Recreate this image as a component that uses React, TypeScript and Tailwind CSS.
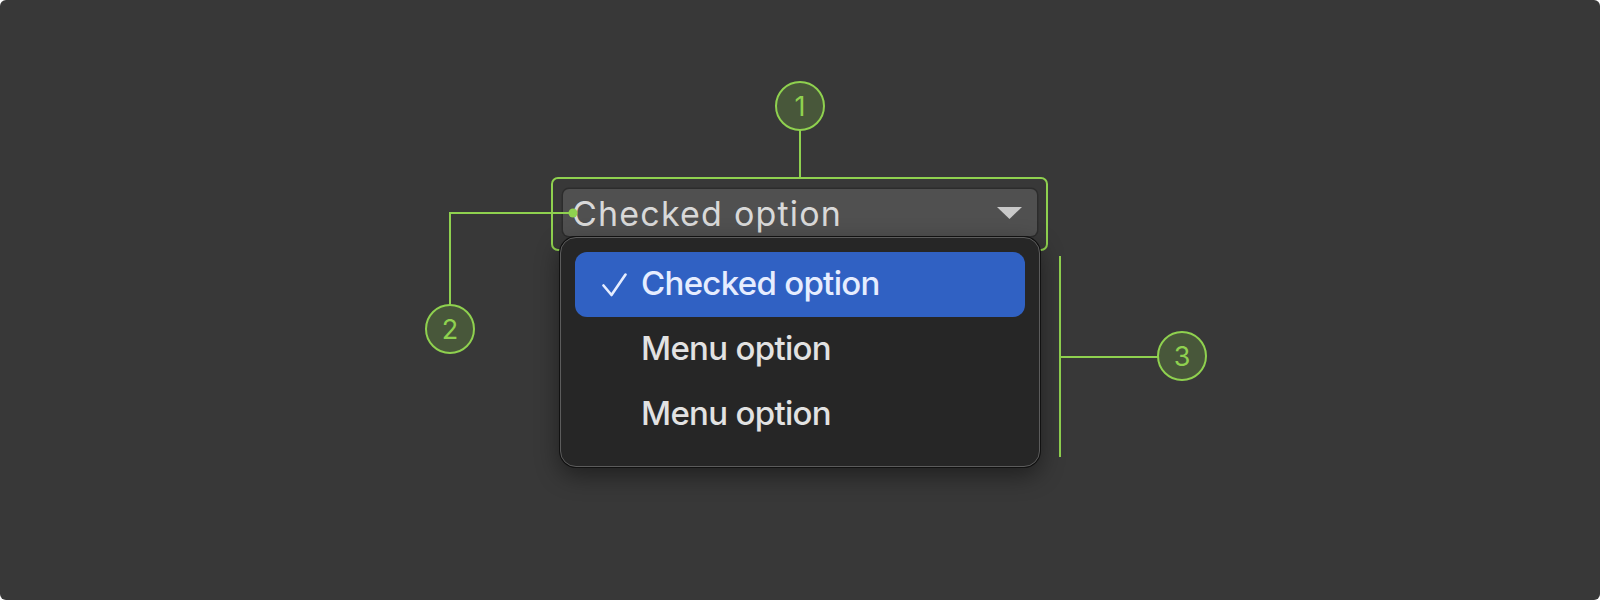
import React from 'react';

const green = '#8fd14f';

function Marker({ cx, cy, n }: { cx: number; cy: number; n: string }) {
  return (
    <g>
      <circle cx={cx} cy={cy} r={24} fill="#48573a" stroke={green} strokeWidth={2} />
      <text
        x={cx}
        y={cy + 9.5}
        textAnchor="middle"
        fontSize={27}
        fontFamily="Inter, 'Noto Sans', sans-serif"
        fill={green}
      >
        {n}
      </text>
    </g>
  );
}

function Check() {
  return (
    <svg width="25" height="24" viewBox="0 0 25 24" fill="none">
      <path d="M1.5 12.5 L9.5 22 L23.5 1.5" stroke="#e6edff" strokeWidth="2.6" strokeLinecap="round" strokeLinejoin="round" />
    </svg>
  );
}

const options = [
  { label: 'Checked option', checked: true },
  { label: 'Menu option', checked: false },
  { label: 'Menu option', checked: false },
];

export default function App() {
  return (
    <div className="w-[1600px] h-[600px] bg-white">
      <div className="relative h-full w-full rounded-[6px] bg-[#383838] flex justify-center pt-[189px]">
        <div className="relative w-[474px]">
          {/* trigger */}
          <div className="h-[47px] rounded-[6px] bg-[#505050] shadow-[0_0_0_1.5px_#2c2c2c] flex items-center justify-between pl-[9px] pr-[15px]">
            <span className="text-[34px] leading-none tracking-[1.2px] text-[#d9d9d9] font-['Inter',sans-serif] font-normal pt-[2px]">
              Checked option
            </span>
            <svg width="25" height="12" viewBox="0 0 25 12">
              <path d="M0 0 H25 L12.5 12 Z" fill="#c9c9c9" />
            </svg>
          </div>

          {/* menu */}
          <div className="absolute z-20 top-[48px] -left-[3px] w-[480px] rounded-[16px] bg-[#262626] border border-[#5c5c5c] shadow-[0_0_0_1px_#111111,0_8px_24px_rgba(0,0,0,0.45)] px-[14px] pt-[14px] pb-[19px] flex flex-col">
            {options.map((o, i) => (
              <div
                key={i}
                className={
                  o.checked
                    ? 'h-[65px] rounded-[12px] bg-[#3061c3] flex items-center pl-[27px] gap-[14px]'
                    : 'h-[65px] rounded-[12px] flex items-center pl-[27px] gap-[14px]'
                }
              >
                <div className="w-[25px] flex items-center">{o.checked && <Check />}</div>
                <span
                  className={
                    o.checked
                      ? "text-[33px] leading-none tracking-[-0.7px] font-medium text-[#e6edff] font-['Inter',sans-serif] pb-[3px]"
                      : "text-[33px] leading-none tracking-[-0.7px] font-medium text-[#e2e2e2] font-['Inter',sans-serif] pb-[3px]"
                  }
                >
                  {o.label}
                </span>
              </div>
            ))}
          </div>
        </div>

        {/* annotations */}
        <svg className="absolute inset-0 z-10 pointer-events-none" width="1600" height="600" fill="none">
          <line x1="800" y1="130" x2="800" y2="178" stroke={green} strokeWidth="2" />
          <rect x="552" y="178" width="495" height="72" rx="6" stroke={green} strokeWidth="2" />
          <path d="M573 213 H450 V305" stroke={green} strokeWidth="2" />
          <circle cx="573" cy="213" r="4.5" fill={green} />
          <line x1="1060" y1="256" x2="1060" y2="457" stroke={green} strokeWidth="2" />
          <line x1="1060" y1="357" x2="1158" y2="357" stroke={green} strokeWidth="2" />
          <Marker cx={800} cy={106} n="1" />
          <Marker cx={450} cy={329} n="2" />
          <Marker cx={1182} cy={356} n="3" />
        </svg>
      </div>
    </div>
  );
}
